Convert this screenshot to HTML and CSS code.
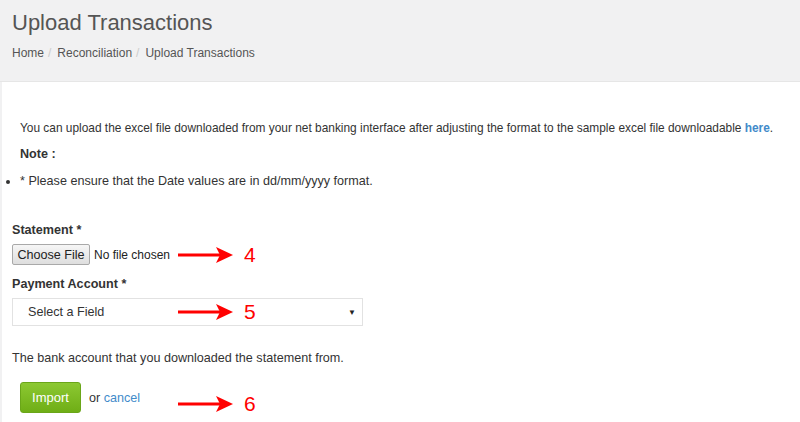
FILE: index.html
```html
<!DOCTYPE html>
<html>
<head>
<meta charset="utf-8">
<link rel="stylesheet" href="styles.css">
</head>
<body>
<div class="page-header">
  <h1 class="title">Upload Transactions</h1>
  <ol class="crumbs">
    <li>Home</li>
    <li class="sep">/</li>
    <li>Reconciliation</li>
    <li class="sep">/</li>
    <li>Upload Transactions</li>
  </ol>
</div>
<div class="panel">
  <div class="intro">
    <p class="lead">You can upload the excel file downloaded from your net banking interface after adjusting the format to the sample excel file downloadable <a href="#">here</a>.</p>
    <p class="note">Note :</p>
  </div>
  <ul class="notes">
    <li>* Please ensure that the Date values are in dd/mm/yyyy format.</li>
  </ul>
  <div class="group first">
    <label class="lbl">Statement *</label>
    <div class="row file-row">
      <span class="file-btn">Choose File</span>
      <span class="file-name">No file chosen</span>
      <span class="mark">
        <svg width="58" height="18" viewBox="0 0 58 18"><line x1="0" y1="9" x2="42" y2="9" stroke="#f00" stroke-width="3"/><polygon points="38,1 55,9 38,17 42,9" fill="#f00"/></svg>
        <span class="num">4</span>
      </span>
    </div>
  </div>
  <div class="group">
    <label class="lbl">Payment Account *</label>
    <div class="row select-row">
      <div class="select">
        <span>Select a Field</span>
        <span class="caret">▼</span>
      </div>
      <span class="mark">
        <svg width="58" height="18" viewBox="0 0 58 18"><line x1="0" y1="9" x2="42" y2="9" stroke="#f00" stroke-width="3"/><polygon points="38,1 55,9 38,17 42,9" fill="#f00"/></svg>
        <span class="num">5</span>
      </span>
    </div>
  </div>
  <p class="help">The bank account that you downloaded the statement from.</p>
  <div class="row actions">
    <span class="btn-import">Import</span>
    <span class="or">or <a href="#">cancel</a></span>
    <span class="mark">
      <svg width="58" height="18" viewBox="0 0 58 18"><line x1="0" y1="9" x2="42" y2="9" stroke="#f00" stroke-width="3"/><polygon points="38,1 55,9 38,17 42,9" fill="#f00"/></svg>
      <span class="num">6</span>
    </span>
  </div>
</div>
</body>
</html>
```
FILE: styles.css
```css
html, body {
  margin: 0;
  padding: 0;
  background: #f1f1f2;
  font-family: "Liberation Sans", Arial, sans-serif;
  font-size: 12.6px;
  color: #333;
}
.page-header {
  height: 82px;
  box-sizing: border-box;
  padding: 8px 12px 0 12px;
  border-bottom: 1px solid #e6e6e6;
}
.title {
  margin: 0;
  font-size: 22px;
  font-weight: normal;
  line-height: 30px;
  color: #555;
}
.crumbs {
  list-style: none;
  margin: 5px 0 0 0;
  padding: 0;
  display: flex;
  gap: 4px;
  line-height: 20px;
  color: #555;
  font-size: 12px;
}
.crumbs .sep {
  color: #ccc;
  margin-right: 2px;
}
.panel {
  margin-left: 2px;
  background: #fff;
  height: 340px;
  padding: 37px 0 0 10px;
  box-sizing: border-box;
  position: relative;
}
.intro {
  padding-left: 8px;
}
.lead {
  margin: 0;
  line-height: 18px;
  white-space: nowrap;
  font-size: 11.9px;
}
a {
  color: #428bca;
  text-decoration: none;
}
.lead a {
  font-weight: 600;
}
.note {
  margin: 8px 0 0 0;
  font-weight: bold;
  line-height: 18px;
}
.notes {
  margin: 9px 0 0 0;
  padding-left: 8px;
  line-height: 18px;
  list-style: disc;
}
.group.first {
  margin-top: 31px;
}
.group {
  margin-top: 10px;
}
.lbl {
  display: block;
  font-weight: bold;
  line-height: 18px;
  margin-bottom: 5px;
}
.row {
  position: relative;
  display: flex;
  align-items: center;
}
.file-row {
  height: 21px;
}
.file-btn {
  box-sizing: border-box;
  height: 21px;
  width: 78px;
  border: 1px solid #a9a9a9;
  border-radius: 2px;
  background: linear-gradient(#f6f6f6, #dedede);
  display: flex;
  align-items: center;
  justify-content: center;
  color: #222;
  font-size: 12.6px;
}
.file-name {
  margin-left: 4px;
  color: #222;
  font-size: 12px;
}
.select {
  box-sizing: border-box;
  width: 351px;
  height: 28px;
  border: 1px solid #e2e2e2;
  display: flex;
  align-items: center;
  justify-content: space-between;
  padding: 0 6px 0 15px;
  color: #333;
  font-size: 12.6px;
}
.caret {
  font-size: 8px;
  color: #222;
}
.help {
  margin: 23px 0 0 0;
  line-height: 18px;
}
.actions {
  margin-top: 15px;
  padding-left: 8px;
  height: 31px;
}
.btn-import {
  box-sizing: border-box;
  width: 61px;
  height: 31px;
  border-radius: 3px;
  background: linear-gradient(#8cc832, #6fae16);
  border: 1px solid #6aa619;
  color: #fff;
  font-size: 13px;
  display: flex;
  align-items: center;
  justify-content: center;
}
.or {
  margin-left: 8px;
  color: #333;
}
.mark {
  position: absolute;
  left: 166px;
  top: 50%;
  transform: translateY(-50%);
  display: flex;
  align-items: center;
  gap: 8px;
}
.mark svg {
  display: block;
}
.num {
  color: #f00;
  font-size: 21px;
  line-height: 20px;
}
.actions .mark {
  transform: translateY(calc(-50% + 6px));
}
```
